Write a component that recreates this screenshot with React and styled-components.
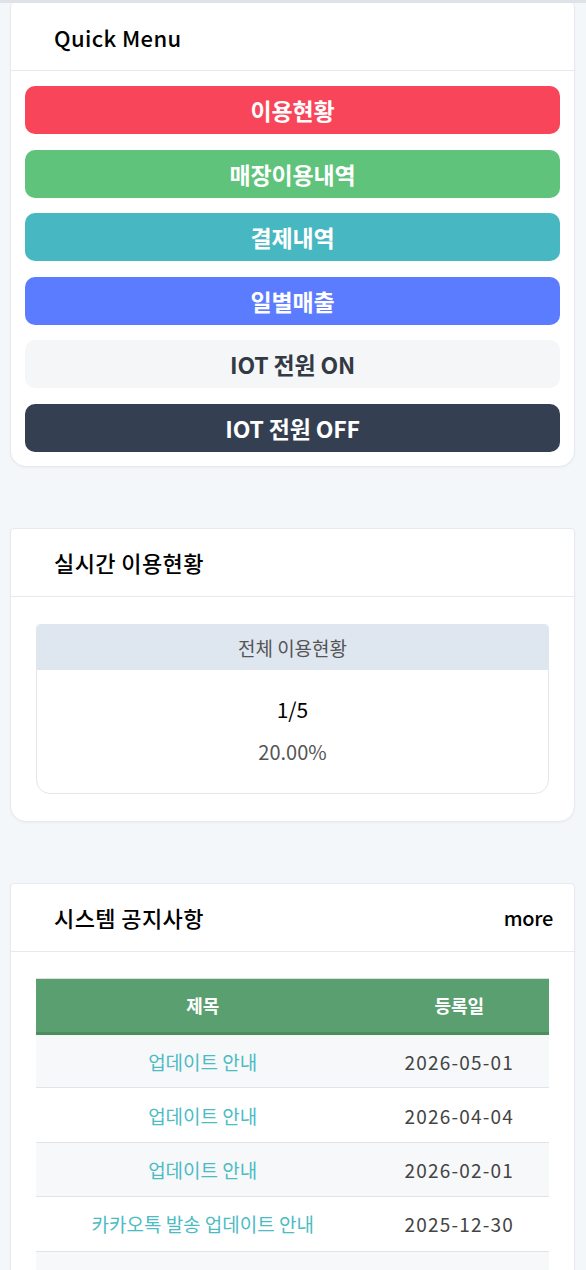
import React from 'react'
import styled, { createGlobalStyle } from 'styled-components'

const GlobalStyle = createGlobalStyle`
    * { box-sizing: border-box; }
    body {
        margin: 0;
        background: #f4f7fa;
        font-family: "Noto Sans CJK KR", "Noto Sans", sans-serif;
    }
`

const Page = styled.div`
    display: flex;
    flex-direction: column;
    row-gap: 61px;
    padding: 0 11px 40px 10px;
    border-top: 3px solid #dfe3e8;
    min-height: 1270px;
`

const Card = styled.section`
    display: flex;
    flex-direction: column;
    background: #fff;
    border: 1px solid #e6e9ee;
    border-top: ${p => (p.$flush ? 'none' : '1px solid #e6e9ee')};
    border-radius: 4px 4px 16px 16px;
    box-shadow: 0 1px 2px rgba(30, 40, 60, 0.04);
`

const CardHeader = styled.div`
    display: flex;
    justify-content: space-between;
    align-items: center;
    height: 68px;
    padding: 0 21px 0 43px;
    border-bottom: 1px solid #e6e9ee;
`

const CardTitle = styled.h2`
    margin: 0;
    font-size: 22px;
    font-weight: 500;
    color: #000;
    letter-spacing: 0.4px;
`

const MoreLink = styled.a`
    font-size: 20px;
    font-weight: 500;
    color: #000;
    text-decoration: none;
    letter-spacing: -0.3px;
`

const MenuBody = styled.div`
    display: flex;
    flex-direction: column;
    row-gap: 15.6px;
    padding: 15px 14px 14px 14px;
`

const MenuButton = styled.button`
    display: flex;
    align-items: center;
    justify-content: center;
    height: 48px;
    border: none;
    border-radius: 10px;
    background: ${p => p.$bg};
    color: ${p => p.$fg || '#fff'};
    font-family: inherit;
    font-size: 23px;
    font-weight: 700;
    letter-spacing: -0.2px;
    cursor: pointer;
`

const CardBody = styled.div`
    padding: ${p => p.$top || 27}px 25px 27px;
`

const StatBox = styled.div`
    display: flex;
    flex-direction: column;
    border: 1px solid #e3e7ec;
    border-radius: 4px 4px 14px 14px;
    overflow: hidden;
`

const StatHead = styled.div`
    display: flex;
    align-items: center;
    justify-content: center;
    height: 45px;
    background: #dee6f0;
    color: #555;
    font-size: 19px;
`

const StatValue = styled.div`
    text-align: center;
    font-size: ${p => p.$size}px;
    color: ${p => p.$color};
    line-height: 1;
    margin-top: ${p => p.$mt}px;
`

const StatBottom = styled.div`
    height: 31px;
`

const Table = styled.table`
    width: 100%;
    border-collapse: collapse;
    border-top: 1px solid #dcdfe3;
`

const Th = styled.th`
    height: 55px;
    background: #5a9f70;
    border-bottom: 3px solid #4d8e61;
    color: #fff;
    font-size: 18px;
    font-weight: 700;
    width: ${p => p.$w};
`

const Tr = styled.tr`
    background: ${p => (p.$striped ? '#f7f8fa' : '#fff')};
    border-bottom: 1px solid #e0e3e7;
`

const Td = styled.td`
    height: 54.4px;
    text-align: center;
    font-size: 19px;
    color: ${p => (p.$link ? '#4bbcc4' : '#444')};
    letter-spacing: ${p => (p.$link ? '0' : '1.2px')};
`

const menus = [
    { label: '이용현황', bg: '#f94559' },
    { label: '매장이용내역', bg: '#60c37c' },
    { label: '결제내역', bg: '#47b8c1' },
    { label: '일별매출', bg: '#5c7cff' },
    { label: 'IOT 전원 ON', bg: '#f5f6f8', fg: '#333a44' },
    { label: 'IOT 전원 OFF', bg: '#353f52' },
]

const notices = [
    { title: '업데이트 안내', date: '2026-05-01' },
    { title: '업데이트 안내', date: '2026-04-04' },
    { title: '업데이트 안내', date: '2026-02-01' },
    { title: '카카오톡 발송 업데이트 안내', date: '2025-12-30' },
    { title: '업데이트 안내', date: '2025-11-20' },
]

const App = () => {
    return (
        <>
            <GlobalStyle />
            <Page>
                <Card $flush>
                    <CardHeader>
                        <CardTitle>Quick Menu</CardTitle>
                    </CardHeader>
                    <MenuBody>
                        {menus.map(m => (
                            <MenuButton key={m.label} $bg={m.bg} $fg={m.fg}>
                                {m.label}
                            </MenuButton>
                        ))}
                    </MenuBody>
                </Card>

                <Card>
                    <CardHeader>
                        <CardTitle>실시간 이용현황</CardTitle>
                    </CardHeader>
                    <CardBody>
                        <StatBox>
                            <StatHead>전체 이용현황</StatHead>
                            <StatValue $size={21} $color="#000" $mt={29}>1/5</StatValue>
                            <StatValue $size={20} $color="#555" $mt={22}>20.00%</StatValue>
                            <StatBottom />
                        </StatBox>
                    </CardBody>
                </Card>

                <Card>
                    <CardHeader>
                        <CardTitle>시스템 공지사항</CardTitle>
                        <MoreLink href="#">more</MoreLink>
                    </CardHeader>
                    <CardBody $top={26}>
                        <Table>
                            <thead>
                                <tr>
                                    <Th $w="65%">제목</Th>
                                    <Th $w="35%">등록일</Th>
                                </tr>
                            </thead>
                            <tbody>
                                {notices.map((n, i) => (
                                    <Tr key={i} $striped={i % 2 === 0}>
                                        <Td $link>{n.title}</Td>
                                        <Td>{n.date}</Td>
                                    </Tr>
                                ))}
                            </tbody>
                        </Table>
                    </CardBody>
                </Card>
            </Page>
        </>
    )
}

export default App
